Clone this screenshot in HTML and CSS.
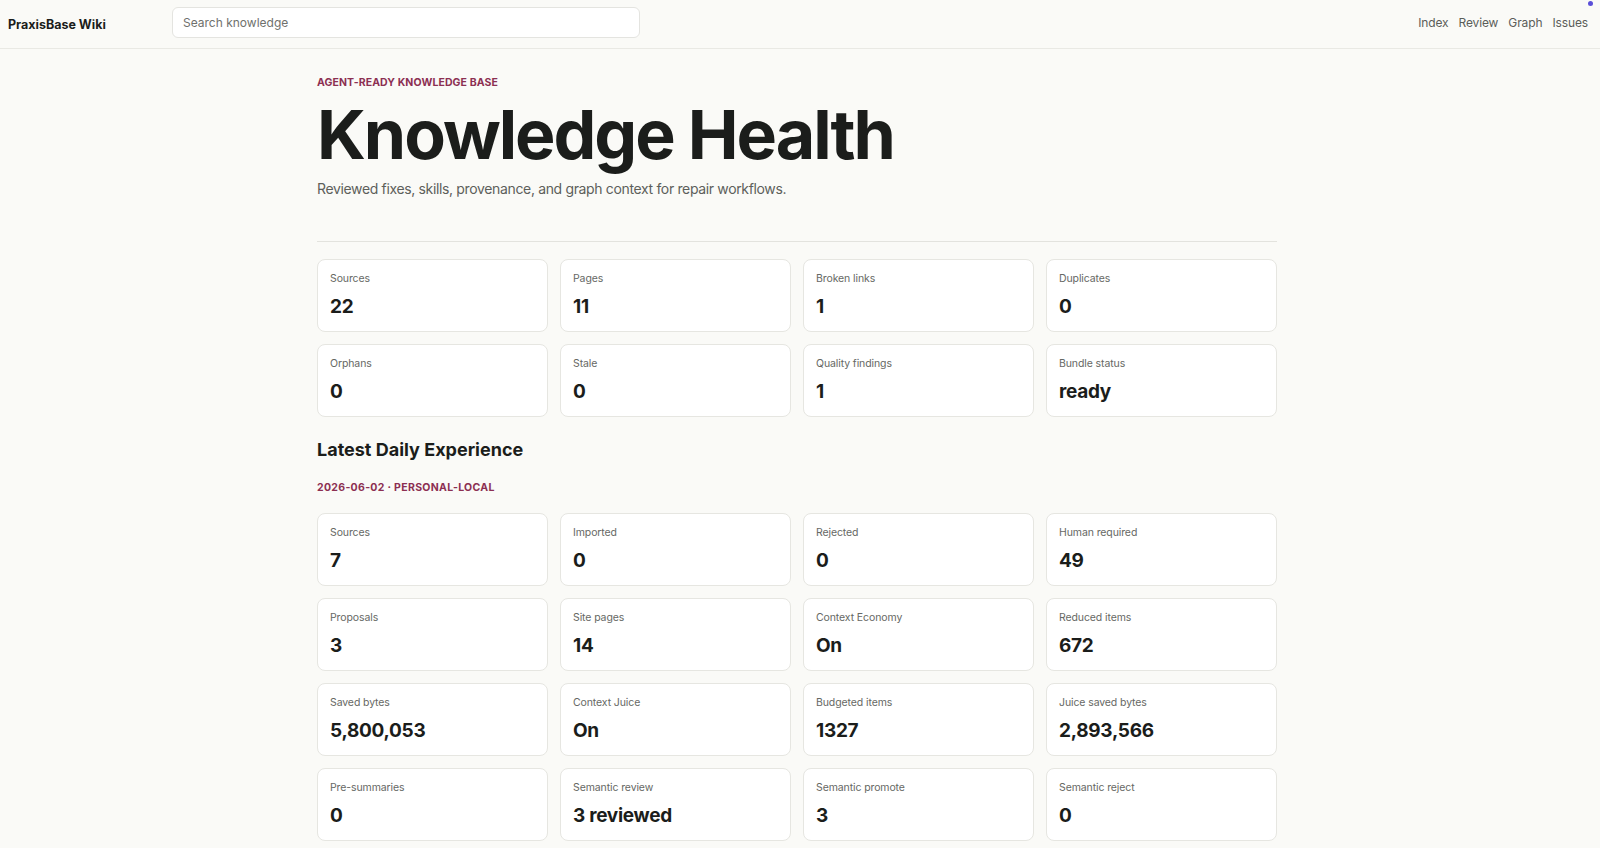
FILE: index.html
```html
<!DOCTYPE html>
<html lang="en">
<head>
    <meta charset="UTF-8">
    <meta name="viewport" content="width=device-width, initial-scale=1.0">
    <title>Knowledge Health - PraxisBase Wiki</title>
    <link rel="stylesheet" href="styles.css">
</head>
<body>

<!-- 頂部導覽列 -->
<header class="topbar">
    <a class="brand" href="#">PraxisBase Wiki</a>
    <input class="search" type="search" placeholder="Search knowledge">
    <nav class="nav-links">
        <a href="#">Index</a>
        <a href="#">Review</a>
        <a href="#">Graph</a>
        <a href="#">Issues</a>
    </nav>
    <span class="live-dot"></span>
</header>

<main class="main-container">
    <section class="hero">
        <p class="eyebrow">Agent-ready knowledge base</p>
        <h1>Knowledge Health</h1>
        <p class="lead">Reviewed fixes, skills, provenance, and graph context for repair workflows.</p>
    </section>

    <hr class="divider">

    <!-- 知識庫統計 -->
    <div class="stat-grid">
        <div class="stat-card"><span class="stat-label">Sources</span><strong class="stat-value">22</strong></div>
        <div class="stat-card"><span class="stat-label">Pages</span><strong class="stat-value">11</strong></div>
        <div class="stat-card"><span class="stat-label">Broken links</span><strong class="stat-value">1</strong></div>
        <div class="stat-card"><span class="stat-label">Duplicates</span><strong class="stat-value">0</strong></div>
        <div class="stat-card"><span class="stat-label">Orphans</span><strong class="stat-value">0</strong></div>
        <div class="stat-card"><span class="stat-label">Stale</span><strong class="stat-value">0</strong></div>
        <div class="stat-card"><span class="stat-label">Quality findings</span><strong class="stat-value">1</strong></div>
        <div class="stat-card"><span class="stat-label">Bundle status</span><strong class="stat-value">ready</strong></div>
    </div>

    <!-- 每日經驗 -->
    <h2 class="section-title">Latest Daily Experience</h2>
    <p class="eyebrow run-meta">2026-06-02 · personal-local</p>

    <div class="stat-grid">
        <div class="stat-card"><span class="stat-label">Sources</span><strong class="stat-value">7</strong></div>
        <div class="stat-card"><span class="stat-label">Imported</span><strong class="stat-value">0</strong></div>
        <div class="stat-card"><span class="stat-label">Rejected</span><strong class="stat-value">0</strong></div>
        <div class="stat-card"><span class="stat-label">Human required</span><strong class="stat-value">49</strong></div>
        <div class="stat-card"><span class="stat-label">Proposals</span><strong class="stat-value">3</strong></div>
        <div class="stat-card"><span class="stat-label">Site pages</span><strong class="stat-value">14</strong></div>
        <div class="stat-card"><span class="stat-label">Context Economy</span><strong class="stat-value">On</strong></div>
        <div class="stat-card"><span class="stat-label">Reduced items</span><strong class="stat-value">672</strong></div>
        <div class="stat-card"><span class="stat-label">Saved bytes</span><strong class="stat-value">5,800,053</strong></div>
        <div class="stat-card"><span class="stat-label">Context Juice</span><strong class="stat-value">On</strong></div>
        <div class="stat-card"><span class="stat-label">Budgeted items</span><strong class="stat-value">1327</strong></div>
        <div class="stat-card"><span class="stat-label">Juice saved bytes</span><strong class="stat-value">2,893,566</strong></div>
        <div class="stat-card"><span class="stat-label">Pre-summaries</span><strong class="stat-value">0</strong></div>
        <div class="stat-card"><span class="stat-label">Semantic review</span><strong class="stat-value">3 reviewed</strong></div>
        <div class="stat-card"><span class="stat-label">Semantic promote</span><strong class="stat-value">3</strong></div>
        <div class="stat-card"><span class="stat-label">Semantic reject</span><strong class="stat-value">0</strong></div>
    </div>
</main>

</body>
</html>
```

FILE: styles.css
```css
/* ========= 主題變數 ========= */
:root {
  --bg-color: #fafaf7;
  --card-bg: #ffffff;
  --border-color: #e6e6e1;
  --text-color: #1b1d1b;
  --muted-color: #666864;
  --accent-color: #8c2f52;
}

/* ========= 全域設定 ========= */
* {
  box-sizing: border-box;
}

body {
  font-family: Inter, "Noto Sans", "Liberation Sans", sans-serif;
  background-color: var(--bg-color);
  color: var(--text-color);
  margin: 0;
}

/* ========= 導覽列 ========= */
.topbar {
  position: relative;
  height: 49px;
  padding: 0 12px 0 8px;
  display: flex;
  align-items: center;
  border-bottom: 1px solid #e9e9e4;
}

.brand {
  width: 164px;
  font-size: 12.5px;
  font-weight: 700;
  color: var(--text-color);
  text-decoration: none;
}

.search {
  width: 468px;
  height: 31px;
  margin-top: -4px;
  padding: 0 10px;
  font-family: inherit;
  font-size: 12px;
  color: var(--text-color);
  background: var(--card-bg);
  border: 1px solid #e4e4e0;
  border-radius: 6px;
  outline: none;
}

.search::placeholder {
  color: #6f716d;
}

.nav-links {
  margin-left: auto;
  margin-top: -4px;
  display: flex;
  gap: 10px;
}

.nav-links a {
  font-size: 12px;
  letter-spacing: -0.01em;
  color: #5b5d59;
  text-decoration: none;
}

.live-dot {
  position: absolute;
  top: 1px;
  right: 7px;
  width: 5px;
  height: 5px;
  border-radius: 50%;
  background: #5a4fd8;
}

/* ========= 主內容 ========= */
.main-container {
  max-width: 966px;
  margin: 0 auto;
  padding: 0 6px 40px 0;
}

.hero {
  padding-top: 27px;
}

.eyebrow {
  margin: 0;
  font-size: 10.5px;
  line-height: 14px;
  font-weight: 700;
  letter-spacing: 0.01em;
  text-transform: uppercase;
  color: var(--accent-color);
}

.hero h1 {
  margin: 2px 0 0;
  font-size: 68px;
  line-height: 84px;
  font-weight: 700;
  letter-spacing: -0.03em;
  color: var(--text-color);
}

.lead {
  margin: 3px 0 0;
  font-size: 14px;
  line-height: 20px;
  letter-spacing: -0.025em;
  color: #5d5f5b;
}

.divider {
  margin: 42px 0 17px;
  border: none;
  border-top: 1px solid #e3e3de;
}

/* ========= 統計卡片 ========= */
.stat-grid {
  display: grid;
  grid-template-columns: repeat(4, 1fr);
  gap: 12px;
}

.stat-card {
  display: flex;
  flex-direction: column;
  gap: 8px;
  padding: 11px 12px 12px;
  background: var(--card-bg);
  border: 1px solid var(--border-color);
  border-radius: 8px;
}

.stat-label {
  font-size: 10.5px;
  line-height: 16px;
  letter-spacing: -0.01em;
  color: var(--muted-color);
}

.stat-value {
  font-size: 19px;
  line-height: 24px;
  font-weight: 700;
  letter-spacing: -0.015em;
  color: var(--text-color);
}

.section-title {
  margin: 21px 0 0;
  font-size: 18px;
  line-height: 24px;
  font-weight: 700;
}

.run-meta {
  margin: 19px 0 18px;
  letter-spacing: 0.03em;
}
```
